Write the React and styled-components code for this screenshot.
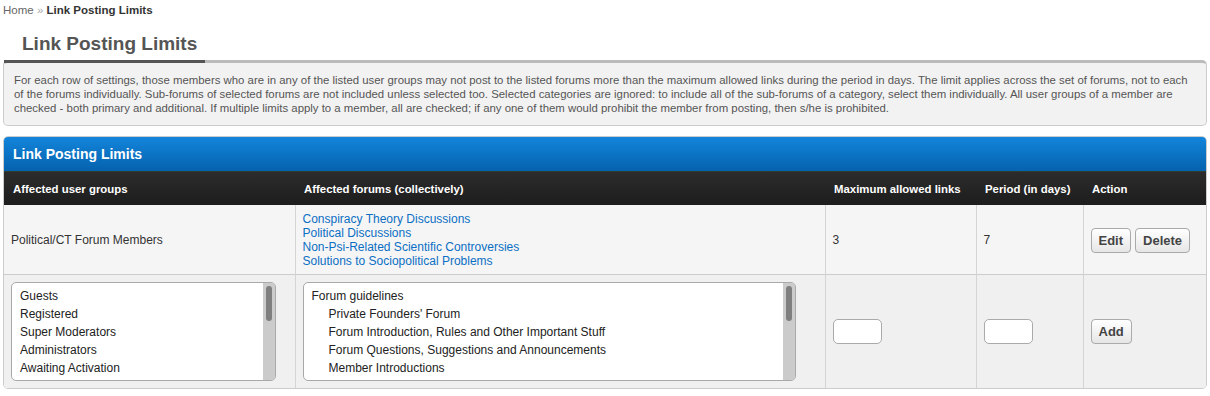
import React from "react";
import styled, { createGlobalStyle } from "styled-components";

const GlobalStyle = createGlobalStyle`
  html, body { margin: 0; padding: 0; background: #fff; }
  body { font-family: "Liberation Sans", Arial, sans-serif; color: #333; }
`;

const Page = styled.div`
  padding: 3px 3px 0;
`;

const Breadcrumb = styled.div`
  font-size: 11.5px;
  line-height: 14px;
  color: #666;
  margin-bottom: 15px;
  a { color: #666; text-decoration: none; }
  span { color: #aaa; }
  b { color: #333; }
`;

const TitleTab = styled.h2`
  position: relative;
  z-index: 1;
  box-sizing: border-box;
  width: 201px;
  margin: 0 0 -3px 1px;
  padding: 0 0 4px 18px;
  font-size: 19px;
  line-height: 24px;
  font-weight: bold;
  color: #555;
  border-bottom: 3px solid #555;
`;

const Description = styled.div`
  border: 1px solid #ccc;
  border-top: 3px solid #bbb;
  border-radius: 5px;
  background: #f2f2f2;
  padding: 10px 10px 10px;
  font-size: 11.4px;
  line-height: 14px;
  color: #555;
`;

const TableBox = styled.div`
  margin-top: 10px;
  border: 1px solid #ccc;
  border-radius: 5px;
  overflow: hidden;
  background: #fff;
`;

const Caption = styled.div`
  height: 34px;
  display: flex;
  align-items: center;
  padding: 0 9px;
  background: linear-gradient(#1385db, #0562ae);
  border-bottom: 1px solid #2f3d33;
  color: #fff;
  font-size: 14px;
  font-weight: bold;
`;

const Table = styled.table`
  width: 100%;
  border-collapse: collapse;
  table-layout: fixed;
`;

const Th = styled.th`
  width: ${(p) => p.$w}px;
  height: 33px;
  padding: 0 9px;
  box-sizing: border-box;
  background: linear-gradient(#2c2c2c, #1d1d1d);
  color: #fff;
  font-size: 11.4px;
  font-weight: bold;
  text-align: left;
  white-space: nowrap;
`;

const Row = styled.tr`
  background: ${(p) => p.$bg};
  border-bottom: ${(p) => (p.$last ? "none" : "1px solid #ccc")};
`;

const Td = styled.td`
  padding: ${(p) => (p.$tall ? "7px" : "7px 7px 6px")};
  vertical-align: middle;
  font-size: 12px;
  line-height: 14px;
  color: #333;
  & + & { border-left: 1px solid #d4d4d4; }
`;

const ForumLink = styled.a`
  display: block;
  color: #0b6fc4;
  text-decoration: none;
`;

const Button = styled.button`
  height: 25px;
  padding: 0 7px;
  margin-right: 4px;
  border: 1px solid #aaa;
  border-radius: 4px;
  background: linear-gradient(#ffffff, #e6e6e6);
  color: #444;
  font-family: "Liberation Sans", Arial, sans-serif;
  font-size: 13px;
  font-weight: bold;
  cursor: pointer;
`;

const NumberInput = styled.input`
  display: block;
  width: 49px;
  height: 25px;
  box-sizing: border-box;
  border: 1px solid #aaa;
  border-radius: 5px;
  background: #fff;
`;

const ListBox = styled.div`
  display: flex;
  width: ${(p) => p.$w}px;
  height: 99px;
  box-sizing: border-box;
  border: 1px solid #a9a9a9;
  border-radius: 5px;
  background: #fff;
  overflow: hidden;
`;

const OptionList = styled.div`
  flex: 1;
  min-width: 0;
  overflow: hidden;
  padding: 4px 0 0;
`;

const ScrollTrack = styled.div`
  width: 12px;
  box-sizing: border-box;
  padding: 3px;
  background: #cbcbcb;
`;

const ScrollThumb = styled.div`
  height: 35px;
  border-radius: 3px;
  background: #7f7f7f;
`;

const Option = styled.div`
  font-size: 12px;
  line-height: 18px;
  padding-left: ${(p) => (p.$indent ? 25 : 8)}px;
  color: #222;
  white-space: nowrap;
`;

const groups = [
  "Guests",
  "Registered",
  "Super Moderators",
  "Administrators",
  "Awaiting Activation",
];

const forums = [
  ["Forum guidelines", false],
  ["Private Founders' Forum", true],
  ["Forum Introduction, Rules and Other Important Stuff", true],
  ["Forum Questions, Suggestions and Announcements", true],
  ["Member Introductions", true],
];

const columns = [
  ["Affected user groups", 291],
  ["Affected forums (collectively)", 530],
  ["Maximum allowed links", 151],
  ["Period (in days)", 107],
  ["Action", 123],
];

function Select({ width, children }) {
  return (
    <ListBox $w={width} role="listbox" aria-multiselectable="true">
      <OptionList>{children}</OptionList>
      <ScrollTrack>
        <ScrollThumb />
      </ScrollTrack>
    </ListBox>
  );
}

export default function App() {
  return (
    <>
      <GlobalStyle />
      <Page>
        <Breadcrumb>
          <a href="#">Home</a> <span>»</span> <b>Link Posting Limits</b>
        </Breadcrumb>
        <TitleTab>Link Posting Limits</TitleTab>
        <Description>
          For each row of settings, those members who are in any of the listed user groups may not post to the listed
          forums more than the maximum allowed links during the period in days. The limit applies across the set of
          forums, not to each of the forums individually. Sub-forums of selected forums are not included unless
          selected too. Selected categories are ignored: to include all of the sub-forums of a category, select them
          individually. All user groups of a member are checked - both primary and additional. If multiple limits
          apply to a member, all are checked; if any one of them would prohibit the member from posting, then s/he is
          prohibited.
        </Description>
        <TableBox>
          <Caption>Link Posting Limits</Caption>
          <Table>
            <thead>
              <tr>
                {columns.map(([label, w]) => (
                  <Th key={label} $w={w}>
                    {label}
                  </Th>
                ))}
              </tr>
            </thead>
            <tbody>
              <Row $bg="#f5f5f5">
                <Td>Political/CT Forum Members</Td>
                <Td>
                  <ForumLink href="#">Conspiracy Theory Discussions</ForumLink>
                  <ForumLink href="#">Political Discussions</ForumLink>
                  <ForumLink href="#">Non-Psi-Related Scientific Controversies</ForumLink>
                  <ForumLink href="#">Solutions to Sociopolitical Problems</ForumLink>
                </Td>
                <Td>3</Td>
                <Td>7</Td>
                <Td>
                  <Button>Edit</Button>
                  <Button>Delete</Button>
                </Td>
              </Row>
              <Row $bg="#f0f0f0" $last>
                <Td $tall>
                  <Select width={265}>
                    {groups.map((g) => (
                      <Option key={g} role="option">
                        {g}
                      </Option>
                    ))}
                  </Select>
                </Td>
                <Td $tall>
                  <Select width={493}>
                    {forums.map(([f, indent]) => (
                      <Option key={f} role="option" $indent={indent}>
                        {f}
                      </Option>
                    ))}
                  </Select>
                </Td>
                <Td $tall>
                  <NumberInput type="text" />
                </Td>
                <Td $tall>
                  <NumberInput type="text" />
                </Td>
                <Td $tall>
                  <Button>Add</Button>
                </Td>
              </Row>
            </tbody>
          </Table>
        </TableBox>
      </Page>
    </>
  );
}
